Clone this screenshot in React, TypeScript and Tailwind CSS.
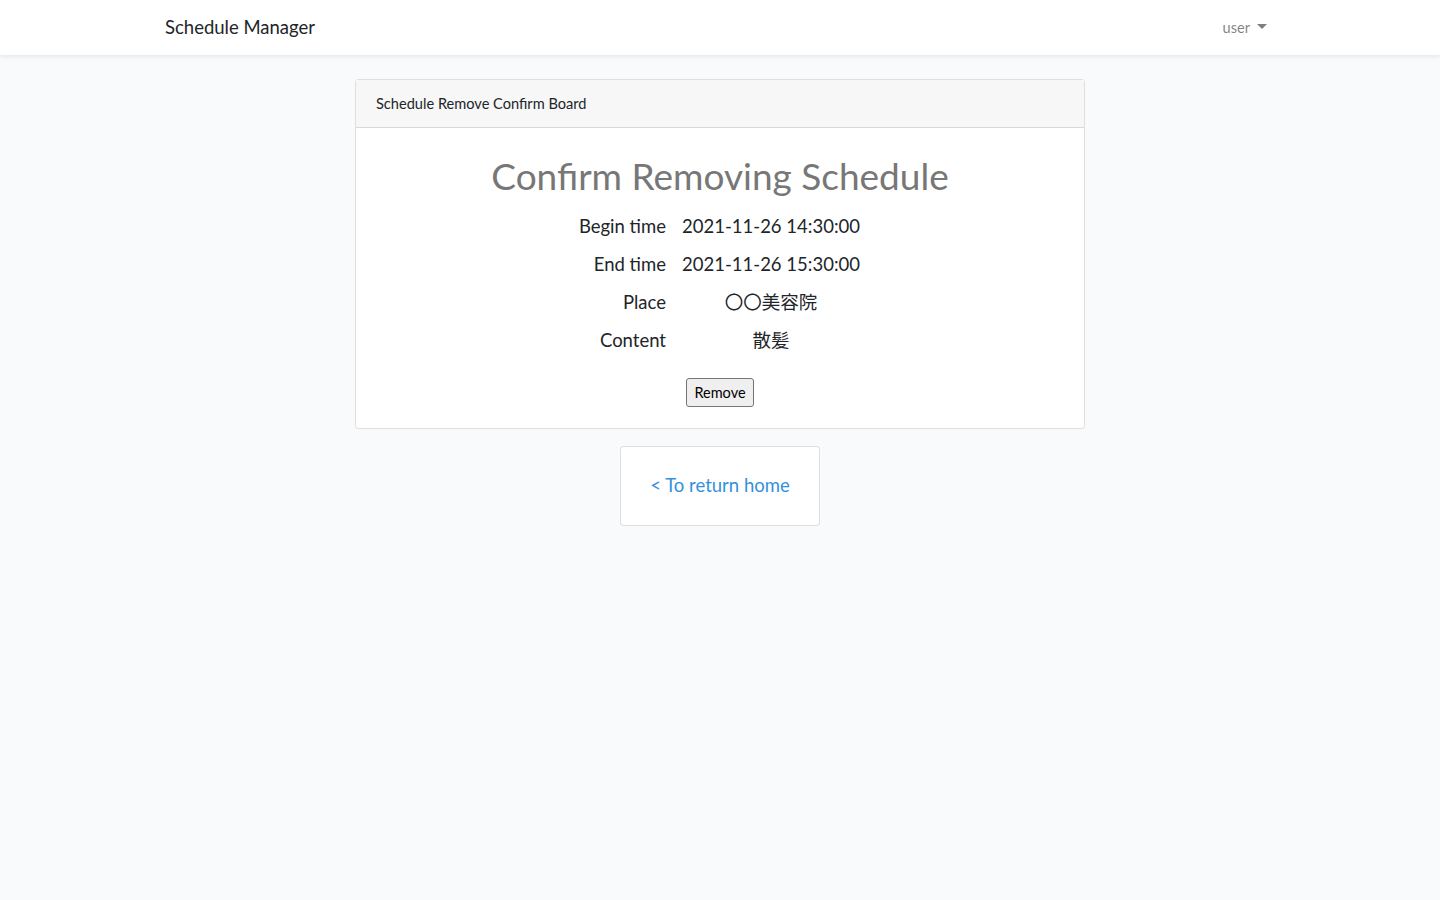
import React from 'react'

const rows: { label: string; value: string }[] = [
  { label: 'Begin time', value: '2021-11-26 14:30:00' },
  { label: 'End time', value: '2021-11-26 15:30:00' },
  { label: 'Place', value: '〇〇美容院' },
  { label: 'Content', value: '散髪' },
]

const App = () => {
  return (
    <div className="min-h-screen bg-[#f8fafc] text-[#212529] font-['Lato','Noto_Sans_CJK_JP',sans-serif]">
      <nav className="h-[55px] bg-white shadow-[0_2px_4px_rgba(0,0,0,0.075)]">
        <div className="mx-auto flex h-full w-[1140px] items-center justify-between px-[15px]">
          <span className="text-[18.5px] text-[#212529]">Schedule Manager</span>
          <button className="flex items-center gap-[7px] px-2 text-[14.6px] text-[rgba(0,0,0,0.5)]">
            user
            <span className="mt-[-2px] h-0 w-0 border-x-[5px] border-t-[5px] border-x-transparent border-t-[rgba(0,0,0,0.5)]" />
          </button>
        </div>
      </nav>

      <main className="flex flex-col items-center pt-6">
        <div className="w-[730px] rounded border border-[rgba(0,0,0,0.125)] bg-white">
          <div className="h-[48px] border-b border-[rgba(0,0,0,0.125)] bg-[#f7f7f7] px-5 py-3 text-[14.6px] leading-[23px]">
            Schedule Remove Confirm Board
          </div>
          <div className="flex flex-col items-center px-5 pt-[26px] pb-[21px]">
            <h1 className="text-[37px] leading-[43px] text-[#777777]">Confirm Removing Schedule</h1>
            <div className="mt-[15px] grid w-full grid-cols-[290px_210px] gap-y-[10px] text-[18.5px] leading-[28px]">
              {rows.map((r) => (
                <React.Fragment key={r.label}>
                  <div className="text-right">{r.label}</div>
                  <div className="text-center">{r.value}</div>
                </React.Fragment>
              ))}
            </div>
            <button className="mt-[24px] h-[29px] rounded-[3px] border border-[#767676] bg-[#efefef] px-[7px] text-[14.5px] text-black">
              Remove
            </button>
          </div>
        </div>

        <div className="mt-[17px] flex h-[80px] w-[200px] items-center justify-center rounded border border-[rgba(0,0,0,0.125)] bg-white">
          <a href="#" className="text-[18.5px] text-[#3490dc]">&lt; To return home</a>
        </div>
      </main>
    </div>
  )
}

export default App
